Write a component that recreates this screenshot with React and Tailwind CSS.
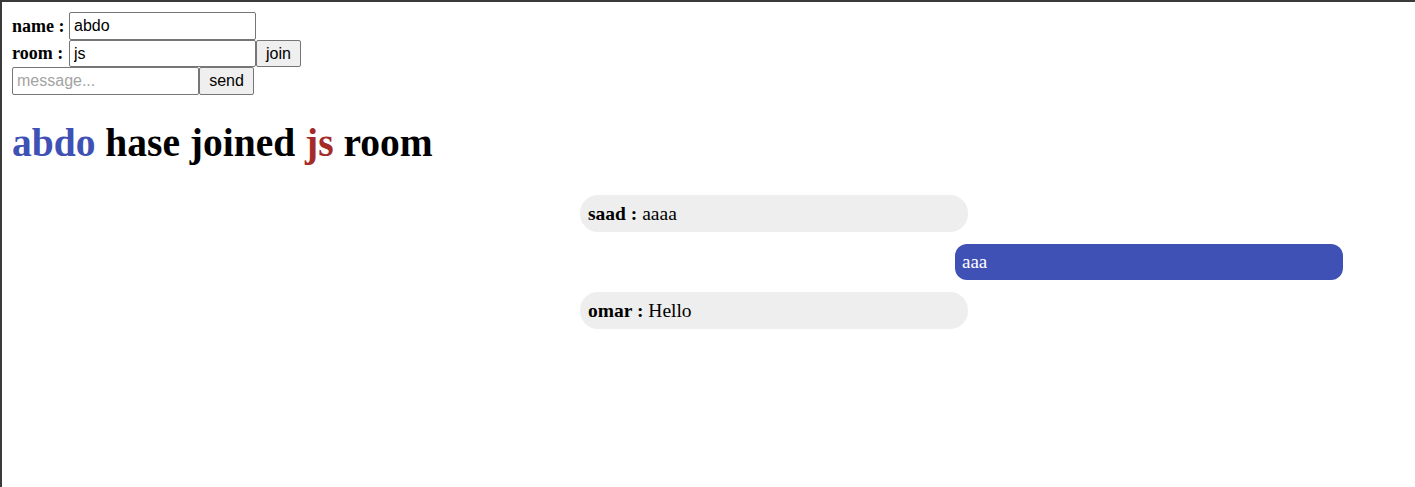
import { useState } from "react";

const messages = [
  { id: 1, user: "saad", text: "aaaa", mine: false },
  { id: 2, user: "abdo", text: "aaa", mine: true },
  { id: 3, user: "omar", text: "Hello", mine: false },
];

const App = () => {
  const [name, setName] = useState("abdo");
  const [room, setRoom] = useState("js");
  const [message, setMessage] = useState("");

  return (
    <div className="min-h-[487px] border-l-2 border-t-2 border-[#3a3a3a] bg-white text-black font-['Liberation_Serif','Times_New_Roman',serif]">
      <div className="pl-[10px] pt-[10px]">
        {/* join form */}
        <div className="flex h-[28px] items-center">
          <span className="w-[57px] text-[18px] font-bold">name :</span>
          <input
            value={name}
            onChange={(e) => setName(e.target.value)}
            className="h-[28px] w-[187px] rounded-[2px] border border-[#767676] px-[4px] font-['Liberation_Sans',Arial,sans-serif] text-[16px] outline-none"
          />
        </div>
        <div className="flex h-[27px] items-center">
          <span className="w-[57px] text-[18px] font-bold">room :</span>
          <input
            value={room}
            onChange={(e) => setRoom(e.target.value)}
            className="h-[27px] w-[187px] rounded-[2px] border border-[#767676] px-[4px] font-['Liberation_Sans',Arial,sans-serif] text-[16px] outline-none"
          />
          <button className="h-[27px] w-[45px] rounded-[2px] border border-[#767676] bg-[#efefef] font-['Liberation_Sans',Arial,sans-serif] text-[16px]">
            join
          </button>
        </div>
        <div className="flex h-[28px] items-center">
          <input
            value={message}
            placeholder="message..."
            onChange={(e) => setMessage(e.target.value)}
            className="h-[28px] w-[187px] rounded-[2px] border border-[#767676] px-[4px] font-['Liberation_Sans',Arial,sans-serif] text-[16px] outline-none placeholder:text-[#a3a3a3]"
          />
          <button className="h-[28px] w-[55px] rounded-[2px] border border-[#767676] bg-[#efefef] font-['Liberation_Sans',Arial,sans-serif] text-[16px]">
            send
          </button>
        </div>

        <h1 className="mt-[25px] text-[39.5px] font-bold leading-[46px]">
          <span className="text-[#3f51b5]">{name}</span> hase joined{" "}
          <span className="text-[#a52a2a]">{room}</span> room
        </h1>
      </div>

      {/* messages */}
      <div className="mt-[29px] flex justify-end pr-[72px]">
        <div className="flex w-[763px] flex-col gap-[12px]">
          {messages.map((m) =>
            m.mine ? (
              <div
                key={m.id}
                className="flex h-[36px] w-[388px] items-center self-end rounded-[12px] bg-[#3f51b5] px-[7px] text-[19px] text-white"
              >
                {m.text}
              </div>
            ) : (
              <div
                key={m.id}
                className="flex h-[37px] w-[388px] items-center self-start rounded-[18px] bg-[#eeeeee] px-[8px] text-[19.5px]"
              >
                <b>{m.user} :</b>&nbsp;{m.text}
              </div>
            )
          )}
        </div>
      </div>
    </div>
  );
};

export default App;
